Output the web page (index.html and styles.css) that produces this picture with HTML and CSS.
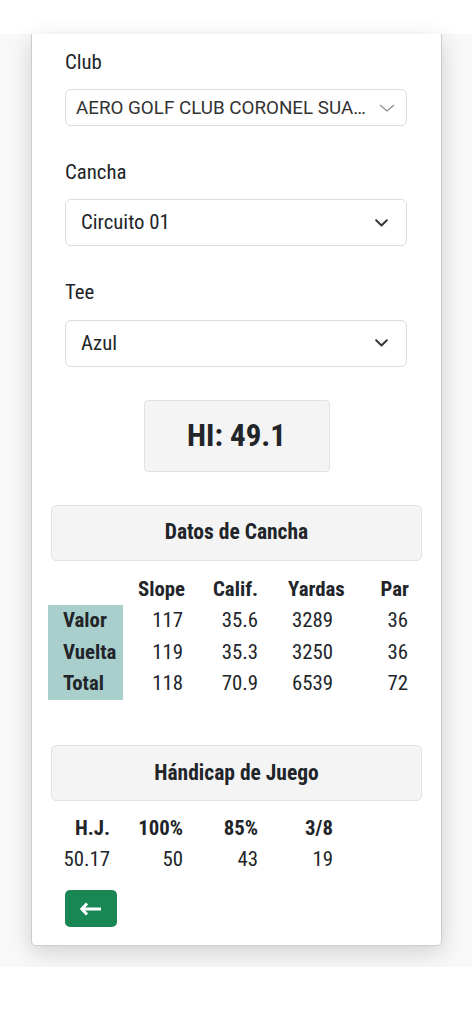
FILE: index.html
```html
<!DOCTYPE html>
<html lang="es">
<head>
<meta charset="utf-8">
<title>Hándicap de Juego</title>
<link rel="stylesheet" href="styles.css">
</head>
<body>
<div class="topbar"></div>
<main class="page">
  <section class="card">
    <div class="form">
      <div class="field">
        <label class="label">Club</label>
        <div class="select select-club">
          <span class="select-text">AERO GOLF CLUB CORONEL SUA…</span>
          <svg class="chev-thin" width="16" height="8" viewBox="0 0 16 8"><polyline points="1,1 8,7 15,1" fill="none" stroke="#8a8a8a" stroke-width="1.1"/></svg>
        </div>
      </div>
      <div class="field">
        <label class="label">Cancha</label>
        <div class="select">
          <span class="select-text">Circuito 01</span>
          <svg class="chev" width="13" height="8" viewBox="0 0 13 8"><polyline points="1.2,1.2 6.5,6.5 11.8,1.2" fill="none" stroke="#343a40" stroke-width="2" stroke-linecap="round" stroke-linejoin="round"/></svg>
        </div>
      </div>
      <div class="field">
        <label class="label">Tee</label>
        <div class="select">
          <span class="select-text">Azul</span>
          <svg class="chev" width="13" height="8" viewBox="0 0 13 8"><polyline points="1.2,1.2 6.5,6.5 11.8,1.2" fill="none" stroke="#343a40" stroke-width="2" stroke-linecap="round" stroke-linejoin="round"/></svg>
        </div>
      </div>
    </div>

    <div class="hi">HI: 49.1</div>

    <div class="section-title">Datos de Cancha</div>
    <div class="course">
      <div class="cell"></div>
      <div class="cell th">Slope</div>
      <div class="cell th">Calif.</div>
      <div class="cell th">Yardas</div>
      <div class="cell th th-end">Par</div>

      <div class="cell rowlabel">Valor</div>
      <div class="cell num">117</div>
      <div class="cell num">35.6</div>
      <div class="cell num">3289</div>
      <div class="cell num">36</div>

      <div class="cell rowlabel">Vuelta</div>
      <div class="cell num">119</div>
      <div class="cell num">35.3</div>
      <div class="cell num">3250</div>
      <div class="cell num">36</div>

      <div class="cell rowlabel">Total</div>
      <div class="cell num">118</div>
      <div class="cell num">70.9</div>
      <div class="cell num">6539</div>
      <div class="cell num">72</div>
    </div>

    <div class="section-title section-title-hj">Hándicap de Juego</div>
    <div class="hj">
      <div class="cell th-r">H.J.</div>
      <div class="cell th-r">100%</div>
      <div class="cell th-r">85%</div>
      <div class="cell th-r">3/8</div>
      <div class="cell val">50.17</div>
      <div class="cell val">50</div>
      <div class="cell val">43</div>
      <div class="cell val">19</div>
    </div>

    <button class="back" type="button" aria-label="Volver">
      <svg width="22" height="14" viewBox="0 0 22 14"><path d="M7 1.5 1.8 7 7 12.5M2 7H21" fill="none" stroke="#ffffff" stroke-width="3" stroke-linecap="butt" stroke-linejoin="miter"/></svg>
    </button>
  </section>
</main>
</body>
</html>
```

FILE: styles.css
```css
* {
  box-sizing: border-box;
}

html, body {
  margin: 0;
  padding: 0;
  background: #ffffff;
}

body {
  font-family: "Roboto", "Liberation Sans", sans-serif;
  font-stretch: condensed;
  color: #212529;
  font-size: 20.8px;
  line-height: 1.5;
}

.topbar {
  height: 34px;
  background: #ffffff;
}

.page {
  background: #f8f8f8;
  padding: 0 30px 21px 31px;
}

.card {
  background: #ffffff;
  border: 1px solid #cccccc;
  border-top: 0;
  border-radius: 0 0 5px 5px;
  box-shadow: 0 6px 22px rgba(0, 0, 0, 0.16);
  padding: 13px 0 18px 0;
  display: flex;
  flex-direction: column;
}

.form {
  padding: 0 34px 0 33px;
  display: flex;
  flex-direction: column;
  gap: 31px;
}

.field {
  display: flex;
  flex-direction: column;
}

.label {
  display: block;
  margin-bottom: 11px;
  font-size: 20.8px;
  line-height: 31.2px;
}

.select {
  height: 47px;
  border: 1px solid #dcdcdc;
  border-radius: 6px;
  display: flex;
  align-items: center;
  padding: 0 18px 0 15px;
  background: #ffffff;
}

.select-text {
  flex: 1;
  min-width: 0;
  white-space: nowrap;
  font-size: 20.8px;
}

.select-club {
  height: 37px;
  padding: 0 11px 0 10px;
}

.select-club .select-text {
  font-stretch: normal;
  font-size: 18.8px;
  color: #333333;
}

.chev-thin {
  flex: none;
}

.chev {
  flex: none;
}

.hi {
  align-self: center;
  margin-top: 33px;
  width: 186px;
  height: 72px;
  background: #f4f4f4;
  border: 1px solid #e2e2e2;
  border-radius: 4px;
  display: flex;
  align-items: center;
  justify-content: center;
  font-size: 31px;
  font-weight: 700;
  line-height: 1;
}

.section-title {
  margin: 33px 19px 0 19px;
  height: 56px;
  background: #f4f4f4;
  border: 1px solid #e2e2e2;
  border-radius: 5px;
  display: flex;
  align-items: center;
  justify-content: center;
  font-weight: 700;
  font-size: 21.5px;
}

.section-title-hj {
  margin-top: 45px;
}

.course {
  margin: 13px 0 0 16px;
  display: grid;
  grid-template-columns: 75px 75px 75px 75px 75px;
  grid-auto-rows: 31.6px;
}

.cell {
  line-height: 31.6px;
  white-space: nowrap;
}

.th {
  font-weight: 700;
  padding-left: 15px;
}

.th-end {
  text-align: right;
  padding-left: 0;
  padding-right: 14px;
}

.rowlabel {
  background: #a9cfcd;
  font-weight: 700;
  padding-left: 15px;
}

.num {
  text-align: right;
  padding-right: 15px;
}

.hj {
  margin: 12px 0 0 16px;
  display: grid;
  grid-template-columns: 62px 73px 75px 75px;
  grid-auto-rows: 31.2px;
}

.hj .cell {
  line-height: 31.2px;
}

.th-r {
  font-weight: 700;
  text-align: right;
}

.val {
  text-align: right;
}

.back {
  margin: 15px 0 0 33px;
  align-self: flex-start;
  width: 52px;
  height: 37px;
  background: #198754;
  border: 0;
  border-radius: 5px;
  display: flex;
  align-items: center;
  justify-content: center;
  padding: 0;
}
```
